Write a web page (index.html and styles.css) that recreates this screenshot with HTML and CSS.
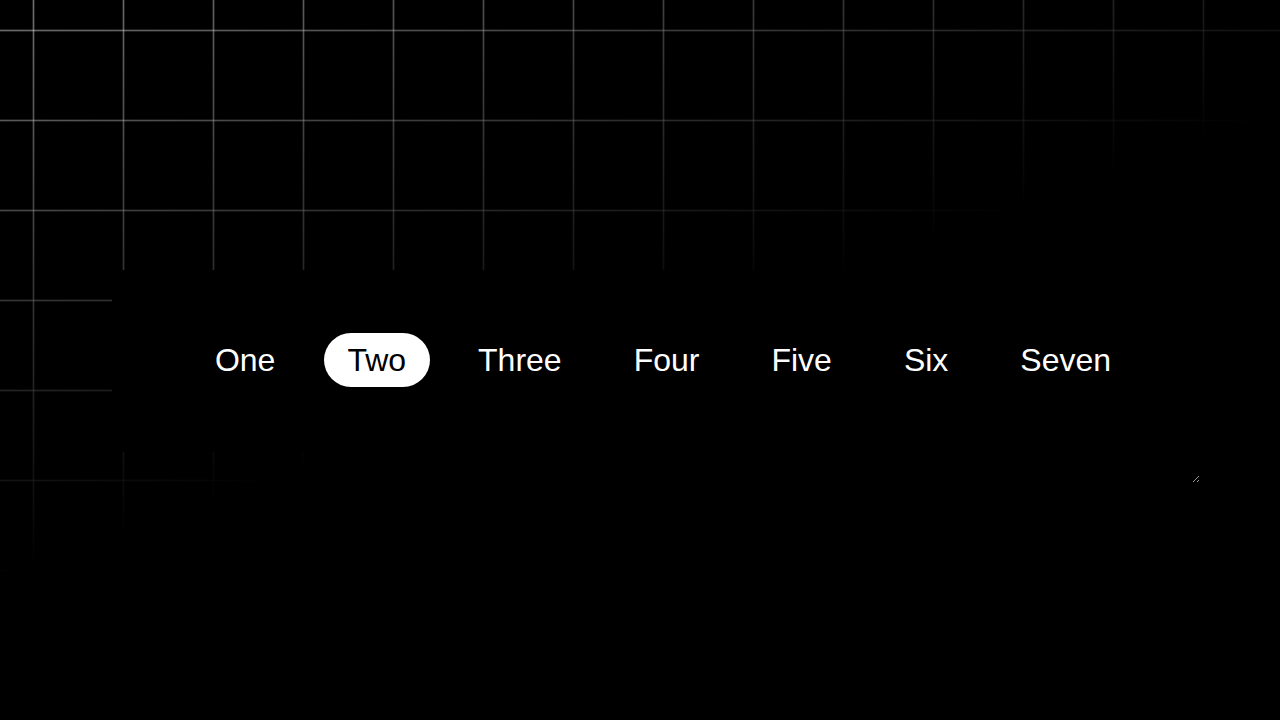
FILE: index.html
```html
<!DOCTYPE html>
<html lang="en">
<head>
    <meta charset="UTF-8">
    <meta name="viewport" content="width=device-width, initial-scale=1.0">
    <title>Tabs</title>
    <link rel="stylesheet" href="styles.css">
</head>
<body>
    <!-- Resizable demo frame -->
    <div class="stage">
        <div class="frame">
            <div class="panel">
                <nav class="tabs">
                    <a href="#" class="tab">One</a>
                    <a href="#" class="tab active">Two</a>
                    <a href="#" class="tab">Three</a>
                    <a href="#" class="tab">Four</a>
                    <a href="#" class="tab">Five</a>
                    <a href="#" class="tab">Six</a>
                    <a href="#" class="tab">Seven</a>
                </nav>
            </div>
        </div>
    </div>
</body>
</html>
```

FILE: styles.css
```css
* {
    margin: 0;
    padding: 0;
    box-sizing: border-box;
    font-family: 'Liberation Sans', Arial, sans-serif;
}

body {
    min-height: 100vh;
    background: #000;
    color: #fff;
    overflow: hidden;
}

/* grid, fading out toward the bottom right */
body::before {
    content: '';
    position: fixed;
    inset: 0;
    z-index: -1;
    background-image:
        linear-gradient(to right, rgba(255, 255, 255, 0.14) 0 1px, rgba(255, 255, 255, 0.44) 1px 2px, rgba(255, 255, 255, 0.14) 2px 3px, transparent 3px),
        linear-gradient(to bottom, rgba(255, 255, 255, 0.14) 0 1px, rgba(255, 255, 255, 0.44) 1px 2px, rgba(255, 255, 255, 0.14) 2px 3px, transparent 3px);
    background-size: 90px 90px;
    background-position: 32px 29px;
    -webkit-mask-image: linear-gradient(160deg, #000 0%, transparent 49%);
    mask-image: linear-gradient(160deg, #000 0%, transparent 49%);
}

.stage {
    padding: 270px 0 0 112px;
}

.frame {
    width: 1088px;
    height: 213px;
    resize: both;
    overflow: auto;
}

.panel {
    height: 182px;
    background: #000;
    display: flex;
    align-items: center;
    justify-content: center;
    padding-left: 14px;
    padding-bottom: 2px;
}

.tabs {
    display: flex;
    gap: 25px;
}

.tab {
    display: inline-block;
    padding: 9px 23.5px;
    font-size: 32px;
    line-height: 1.15;
    color: #fff;
    text-decoration: none;
    border-radius: 999px;
}

.tab.active {
    background: #fff;
    color: #000;
}
```
